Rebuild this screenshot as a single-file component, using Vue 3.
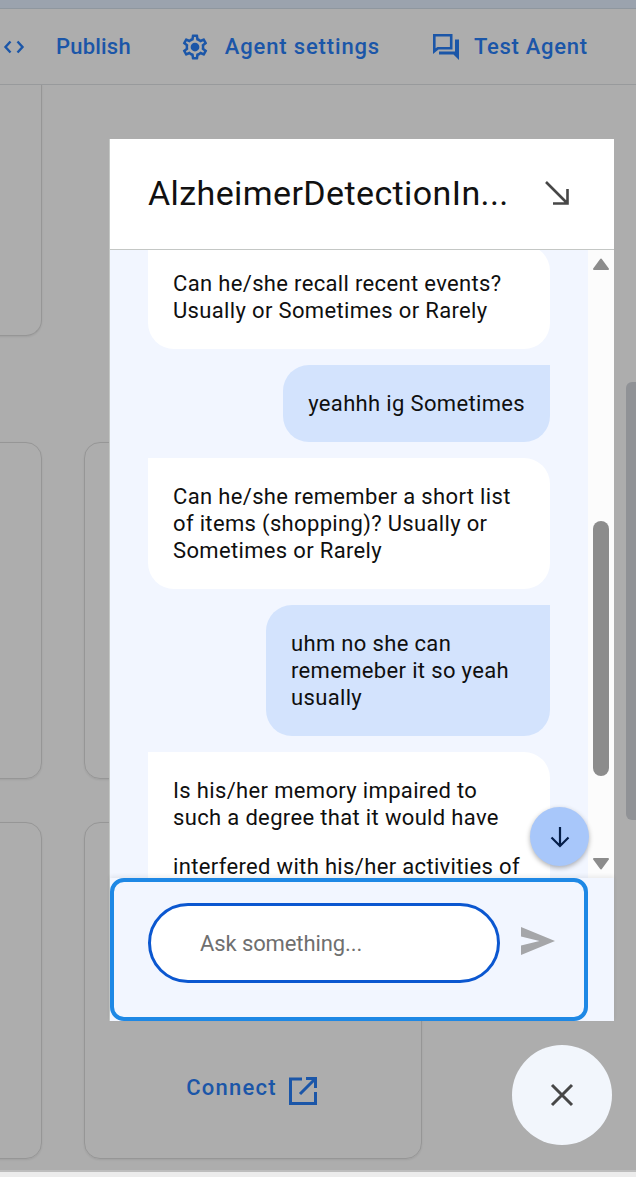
<script setup>
const messages = [
  { id: 1, from: 'bot', lines: ['Can he/she recall recent events? Usually or Sometimes or Rarely'] },
  { id: 2, from: 'user', lines: ['yeahhh ig Sometimes'] },
  { id: 3, from: 'bot', lines: ['Can he/she remember a short list of items (shopping)? Usually or Sometimes or Rarely'] },
  { id: 4, from: 'user', lines: ['uhm no she can rememeber it so yeah usually'] },
  { id: 5, from: 'bot', lines: ['Is his/her memory impaired to such a degree that it would have', 'interfered with his/her activities of daily life?'] },
]
const cards = ['a', 'skip', 'b', 'c', 'd', 'e']
</script>

<template>
  <div class="page">
    <div class="strip"></div>
    <header class="topbar">
      <svg class="code-icon" width="24" height="20" viewBox="0 0 24 20" fill="none" stroke="currentColor" stroke-width="2.4">
        <path d="M8.5 4.5 3.5 10l5 5.5M15.5 4.5l5 5.5-5 5.5" />
      </svg>
      <span class="top-link publish">Publish</span>
      <svg class="gear" width="30" height="30" viewBox="0 0 24 24" fill="currentColor">
        <path d="M19.4 13c.04-.32.06-.66.06-1s-.02-.68-.07-1l2.11-1.63c.19-.15.24-.42.12-.64l-2-3.46c-.12-.22-.39-.3-.61-.22l-2.49 1c-.52-.4-1.08-.73-1.69-.98l-.38-2.65A.49.49 0 0 0 14 2h-4c-.25 0-.46.18-.49.42l-.38 2.65c-.61.25-1.17.59-1.69.98l-2.49-1a.5.5 0 0 0-.61.22l-2 3.46c-.13.22-.07.49.12.64L4.57 11c-.05.32-.07.66-.07 1s.02.68.07 1l-2.11 1.65c-.19.15-.24.42-.12.64l2 3.46c.12.22.39.3.61.22l2.49-1c.52.4 1.08.73 1.69.98l.38 2.65c.03.24.24.4.49.4h4c.25 0 .46-.16.49-.4l.38-2.65c.61-.25 1.17-.59 1.69-.98l2.49 1c.22.08.49 0 .61-.22l2-3.46c.12-.22.07-.49-.12-.64L19.4 13zm-1.98-1.7c.04.31.05.52.05.7s-.02.4-.05.7l-.14 1.13.89.7 1.08.84-.7 1.21-1.27-.51-1.04-.42-.9.68c-.43.32-.84.56-1.25.73l-1.06.43-.16 1.13-.2 1.35h-1.4l-.19-1.35-.16-1.13-1.06-.43c-.43-.18-.83-.41-1.23-.71l-.91-.7-1.06.43-1.27.51-.7-1.21 1.08-.84.89-.7-.14-1.13c-.03-.31-.05-.54-.05-.72s.02-.41.05-.7l.14-1.13-.89-.7-1.08-.84.7-1.21 1.27.51 1.04.42.9-.68c.43-.32.84-.56 1.25-.73l1.06-.43.16-1.13.2-1.35h1.39l.19 1.35.16 1.13 1.06.43c.43.18.83.41 1.23.71l.91.7 1.06-.43 1.27-.51.7 1.21-1.07.85-.89.7.14 1.13zM12 8.5a3.5 3.5 0 1 0 0 7 3.5 3.5 0 0 0 0-7z" />
      </svg>
      <span class="top-link settings">Agent settings</span>
      <svg class="chat-icon" width="28" height="28" viewBox="0 0 28 28" fill="currentColor">
        <path d="M1 1h19.5v15.5H6.5L1 21V1zm2.6 2.6v11.6l1.9-1.3h12.4V3.6H3.6z" />
        <path d="M23 6.5h4V27l-5.5-5.5H7v-3h16V6.5z" />
      </svg>
      <span class="top-link test">Test Agent</span>
    </header>

    <main class="canvas">
      <div v-for="c in cards" :key="c" class="card" :class="{ 'card--skip': c === 'skip', 'card--first': c === 'a' }">
        <div v-if="c === 'e'" class="connect">
          <span class="connect-label">Connect</span>
          <svg width="30" height="30" viewBox="0 0 30 30" fill="none" stroke="currentColor" stroke-width="3">
            <path d="M14 3H2.500v24.500h25V16M18 2.500h9.500V12M27 3 12 18" />
          </svg>
        </div>
      </div>
    </main>
    <div class="bottom-strip"></div>

    <div class="page-thumb"></div>

    <section class="panel">
      <div class="panel-head">
        <h1 class="title">AlzheimerDetectionIn...</h1>
        <svg class="collapse" width="24" height="24" viewBox="0 0 24 24" fill="none" stroke="currentColor" stroke-width="2.600">
          <path d="M1 1 22.500 22.500M22.500 8v14.500H8" />
        </svg>
      </div>

      <div class="chat">
        <div class="messages">
          <div class="list">
            <div v-for="m in messages" :key="m.id" class="bubble" :class="`bubble--${m.from}`">
              <p v-for="line in m.lines" :key="line">{{ line }}</p>
            </div>
          </div>
        </div>
        <div class="scrollbar">
          <svg class="arrow arrow--up" width="16" height="12" viewBox="0 0 16 12" fill="#8c8c8c" stroke="#8c8c8c" stroke-width="2" stroke-linejoin="round">
            <path d="M1 11 8 1.500 15 11z" />
          </svg>
          <span class="thumb"></span>
          <svg class="arrow arrow--down" width="16" height="12" viewBox="0 0 16 12" fill="#8c8c8c" stroke="#8c8c8c" stroke-width="2" stroke-linejoin="round">
            <path d="M1 1 8 10.500 15 1z" />
          </svg>
        </div>
        <button class="to-bottom" aria-label="Scroll to bottom">
          <svg width="24" height="24" viewBox="0 0 24 24" fill="none" stroke="#041e49" stroke-width="2.200">
            <path d="M12 2v19M3.500 12.500 12 21l8.500-8.500" />
          </svg>
        </button>
      </div>

      <div class="composer-wrap">
        <form class="composer" @submit.prevent>
          <input class="ask" type="text" placeholder="Ask something..." />
          <svg class="send" width="36" height="30" viewBox="0 0 36 30" fill="#a5a6a9">
            <path d="M1 1 35 15 1 29v-9.500L19.500 15 1 10.500V1z" />
          </svg>
        </form>
      </div>
    </section>

    <button class="fab" aria-label="Close">
      <svg width="24" height="24" viewBox="0 0 24 24" fill="none" stroke="#474747" stroke-width="3">
        <path d="M2 2l20 20M22 2 2 22" />
      </svg>
    </button>
  </div>
</template>

<style>
html, body {
  margin: 0;
  overflow: hidden;
}
</style>

<style scoped>
.page {
  position: relative;
  width: 636px;
  height: 1177px;
  display: flex;
  flex-direction: column;
  overflow: hidden;
  background: #adadad;
  font-family: Roboto, "Noto Sans", sans-serif;
}

.strip {
  height: 8px;
  flex: none;
  background: #9ba3ae;
  border-bottom: 1px solid #8f979f;
}

.topbar {
  height: 75px;
  flex: none;
  display: flex;
  align-items: center;
  padding-left: 2px;
  border-bottom: 1px solid #989a9c;
  color: #1b56a8;
}

.top-link {
  font-size: 22px;
  font-weight: 500;
  line-height: 28px;
  letter-spacing: 0.2px;
  white-space: nowrap;
}

.code-icon { margin-right: 30px; }
.publish { margin-right: 49px; }
.gear { margin-right: 15px; }
.settings { margin-right: 52px; letter-spacing: 0.85px; }
.chat-icon { margin-right: 14px; }
.test { letter-spacing: 0.7px; }

.canvas {
  flex: 1;
  min-height: 0;
  display: grid;
  grid-template-columns: 337px 338px;
  grid-template-rows: 314px 337px 337px;
  column-gap: 42px;
  row-gap: 43px;
  margin-left: -295px;
  overflow: hidden;
}

.card {
  box-sizing: border-box;
  border: 1px solid #969696;
  border-radius: 16px;
  box-shadow: 0 1px 2px rgba(0, 0, 0, 0.08);
  display: flex;
  align-items: flex-end;
  justify-content: center;
}

.card--first {
  height: 252px;
  margin-top: -1px;
  border-top: 0;
  border-top-left-radius: 0;
  border-top-right-radius: 0;
}

.card--skip {
  visibility: hidden;
}

.connect {
  display: flex;
  align-items: center;
  gap: 11px;
  margin-right: 2px;
  padding-bottom: 52px;
  font-size: 22px;
  font-weight: 500;
  letter-spacing: 1.25px;
  color: #1b56a8;
}

.connect-label {
  margin-bottom: 6px;
}

.bottom-strip {
  height: 5px;
  flex: none;
  background: #ececec;
  border-top: 2px solid #bdbdbd;
}

.page-thumb {
  position: absolute;
  top: 382px;
  right: 0;
  width: 10px;
  height: 438px;
  background: #909296;
  border-radius: 6px 0 0 6px;
}

.panel {
  position: absolute;
  left: 110px;
  top: 139px;
  width: 504px;
  height: 882px;
  display: flex;
  flex-direction: column;
  background: #f2f6ff;
  box-shadow: -1px 0 0 #c4c7c5;
}

.panel-head {
  height: 111px;
  flex: none;
  box-sizing: border-box;
  display: flex;
  align-items: center;
  justify-content: space-between;
  padding: 0 45px 3px 38px;
  background: #fff;
  border-bottom: 1px solid #c4c7c5;
}

.title {
  margin: 0;
  font-size: 34px;
  font-weight: 400;
  letter-spacing: 0.4px;
  color: #111;
  white-space: nowrap;
}

.collapse {
  color: #474747;
}

.chat {
  position: relative;
  height: 628px;
  flex: none;
  display: flex;
}

.messages {
  flex: 1;
  min-width: 0;
  overflow: hidden;
  padding: 0 38px;
}

.list {
  display: flex;
  flex-direction: column;
  gap: 16px;
  margin-top: -5px;
}

.bubble {
  box-sizing: border-box;
  padding: 25px 25px;
  border-radius: 26px;
  font-size: 22px;
  line-height: 27px;
  letter-spacing: 0.34px;
  color: #0f0f0f;
}

.bubble p {
  margin: 0;
}

.bubble p + p {
  margin-top: 22px;
}

.bubble--bot {
  background: #fff;
  border-top-left-radius: 0;
}

.bubble--user {
  align-self: flex-end;
  max-width: 284px;
  background: #d3e3fd;
  border-top-right-radius: 0;
}

.scrollbar {
  width: 26px;
  flex: none;
  display: flex;
  flex-direction: column;
  align-items: center;
  background: #fcfcfc;
}

.arrow {
  display: block;
  flex: none;
}

.arrow--up {
  margin-top: 8px;
}

.arrow--down {
  margin-top: 82px;
}

.thumb {
  width: 16px;
  height: 255px;
  margin-top: 251px;
  border-radius: 8px;
  background: #8c8c8c;
}

.to-bottom {
  position: absolute;
  left: 420px;
  top: 557px;
  width: 59px;
  height: 59px;
  display: flex;
  align-items: center;
  justify-content: center;
  padding: 0;
  border: 0;
  border-radius: 50%;
  background: #a8c7fa;
  box-shadow: 0 2px 5px rgba(0, 0, 0, 0.3);
}

.composer-wrap {
  flex: 1;
  min-height: 0;
  position: relative;
  padding-right: 26px;
  box-shadow: 0 -2px 4px rgba(0, 0, 0, 0.07);
}

.composer {
  box-sizing: border-box;
  height: 100%;
  display: flex;
  align-items: center;
  gap: 20px;
  padding: 0 27px 13px 34px;
  border: 4px solid #1e88e5;
  border-radius: 14px;
  background: #f2f6ff;
}

.ask {
  box-sizing: border-box;
  width: 352px;
  height: 80px;
  flex: none;
  padding: 0 0 0 49px;
  border: 3px solid #0b57d0;
  border-radius: 40px;
  background: #fff;
  outline: none;
  font-family: inherit;
  font-size: 22px;
  letter-spacing: -0.1px;
  color: #111;
}

.ask::placeholder {
  color: #6f6f6f;
  opacity: 1;
}

.send {
  flex: none;
  margin-bottom: 5px;
}

.fab {
  position: absolute;
  left: 512px;
  top: 1045px;
  width: 100px;
  height: 100px;
  display: flex;
  align-items: center;
  justify-content: center;
  padding: 0;
  border: 0;
  border-radius: 50%;
  background: #f2f6fc;
}
</style>
